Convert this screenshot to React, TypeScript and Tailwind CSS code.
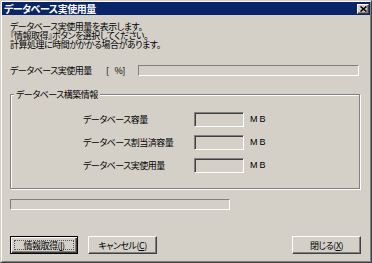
import React from "react";

const font = "font-['Noto_Sans_CJK_JP','Noto_Sans',sans-serif] [font-feature-settings:'palt'] tracking-[-0.5px]";

function Sunken({ className = "" }: { className?: string }) {
  return (
    <div
      className={
        "border border-t-[#808080] border-l-[#808080] border-b-white border-r-white shadow-[inset_1px_1px_0_#404040] bg-[#d4d0c8] " +
        className
      }
    />
  );
}

function StaticBox({ className = "" }: { className?: string }) {
  return (
    <div
      className={
        "border border-t-[#808080] border-l-[#808080] border-b-white border-r-white bg-[#d4d0c8] " +
        className
      }
    />
  );
}

function Btn({
  label,
  mn,
  def = false,
}: {
  label: string;
  mn: string;
  def?: boolean;
}) {
  const text = (
    <span className="text-[9px] leading-[9px] text-black">
      {label}(<span className="underline underline-offset-[1px]">{mn}</span>)
    </span>
  );
  if (def) {
    return (
      <div className="w-[68px] h-[18px] border border-black bg-[#d4d0c8] shadow-[inset_1px_1px_0_#fff,inset_-1px_-1px_0_#404040,inset_-2px_-2px_0_#808080] flex p-[3px]">
        <div className="flex-1 border border-dotted border-[#555] flex items-center justify-center">
          {text}
        </div>
      </div>
    );
  }
  return (
    <div className="w-[69px] h-[18px] border border-t-white border-l-white border-b-[#404040] border-r-[#404040] bg-[#d4d0c8] shadow-[inset_-1px_-1px_0_#808080] flex items-center justify-center">
      {text}
    </div>
  );
}

function Row({ label }: { label: string }) {
  return (
    <div className="flex items-center h-[15px]">
      <div className="w-[111px] text-[9px] leading-[9px] ml-[72px]">{label}</div>
      <Sunken className="w-[50px] h-[15px]" />
      <div className="ml-[6px] text-[9px] leading-[9px] tracking-[2px] font-['Liberation_Sans',sans-serif]">
        MB
      </div>
    </div>
  );
}

export default function App() {
  return (
    <div className={"w-[372px] h-[263px] bg-[#d4d0c8] text-black " + font}>
      <div className="w-full h-full border border-t-[#d4d0c8] border-l-[#d4d0c8] border-b-[#404040] border-r-[#404040]">
        <div className="w-full h-full border border-t-white border-l-white border-b-[#808080] border-r-[#808080] flex flex-col">
          {/* Title bar */}
          <div className="h-[13px] bg-[#0a246a] flex items-center pl-[2px] pr-[1px]">
            <div className="flex-1 text-white font-bold text-[10px] leading-[10px]">
              データベース実使用量
            </div>
            <div className="w-[12px] h-[10px] bg-[#d4d0c8] border border-t-white border-l-white border-b-[#404040] border-r-[#404040] shadow-[inset_-1px_-1px_0_#808080] flex items-center justify-center">
              <svg width="7" height="6" viewBox="0 0 7 6">
                <path d="M0.5 0.5 L6.5 5.5 M6.5 0.5 L0.5 5.5" stroke="#000" strokeWidth="1.6" />
              </svg>
            </div>
          </div>
          {/* Body */}
          <div className="flex-1 flex flex-col pl-[8px] pr-[10px] pt-[7px]">
            <div className="text-[9px] leading-[9px]">
              <div>データベース実使用量を表示します。</div>
              <div>『情報取得』ボタンを選択してください。</div>
              <div>計算処理に時間がかかる場合があります。</div>
            </div>
            <div className="mt-[16px] flex items-center h-[11px]">
              <div className="text-[9px] leading-[9px] w-[96px]">データベース実使用量</div>
              <div className="text-[9px] leading-[9px] w-[32px] flex">
                <span>[</span>
                <span className="ml-[6px]">%]</span>
              </div>
              <StaticBox className="w-[221px] h-[11px]" />
            </div>
            <div className="mt-[18px] h-[95px] w-[350px] border border-[#808080] shadow-[inset_1px_1px_0_#fff,1px_1px_0_#fff] flex flex-col">
              <div className="-mt-[6px] ml-[3px] px-[2px] self-start bg-[#d4d0c8] h-[12px] text-[9px] leading-[12px]">
                データベース構築情報
              </div>
              <div className="mt-[11px] flex flex-col gap-[8px]">
                <Row label="データベース容量" />
                <Row label="データベース割当済容量" />
                <Row label="データベース実使用量" />
              </div>
            </div>
            <StaticBox className="mt-[10px] w-[220px] h-[11px]" />
            <div className="mt-[26px] flex items-center">
              <Btn label="情報取得" mn="I" def />
              <div className="ml-[10px]">
                <Btn label="キャンセル" mn="C" />
              </div>
              <div className="ml-auto -mr-[1px]">
                <Btn label="閉じる" mn="X" />
              </div>
            </div>
          </div>
        </div>
      </div>
    </div>
  );
}
